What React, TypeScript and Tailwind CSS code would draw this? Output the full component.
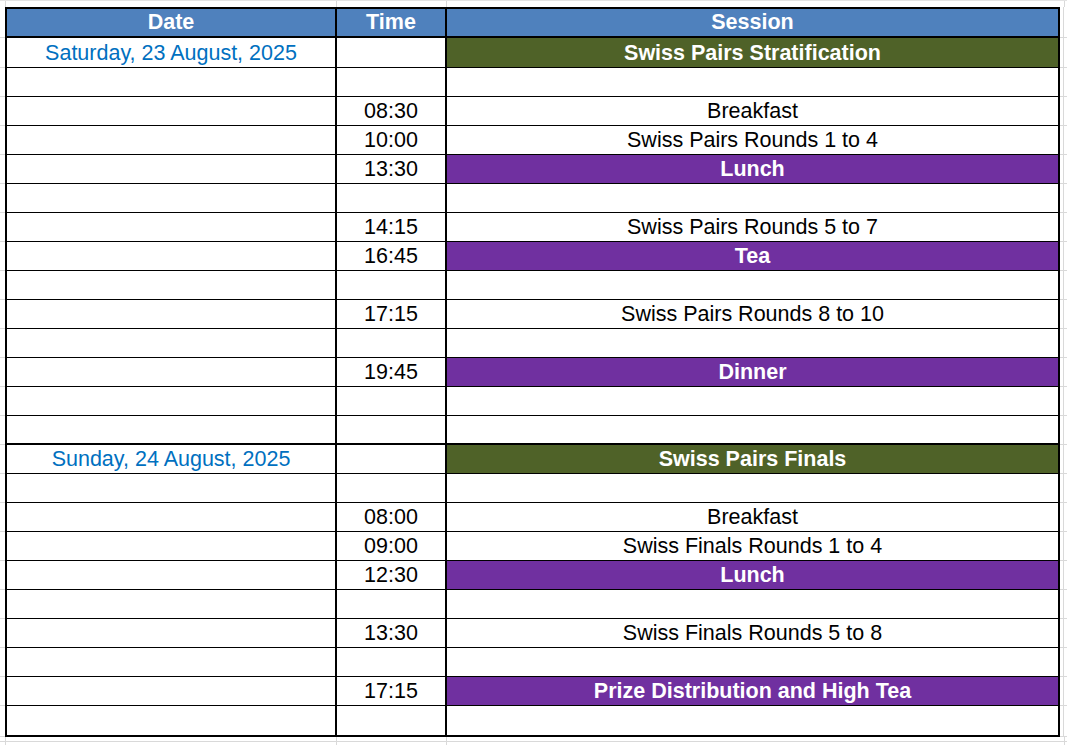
import React from "react";

type Row = { date?: string; time?: string; session?: string; kind?: "green" | "purple" | "plain" };

const rows: Row[] = [
  { date: "Saturday, 23 August, 2025", session: "Swiss Pairs Stratification", kind: "green" },
  {},
  { time: "08:30", session: "Breakfast" },
  { time: "10:00", session: "Swiss Pairs Rounds 1 to 4" },
  { time: "13:30", session: "Lunch", kind: "purple" },
  {},
  { time: "14:15", session: "Swiss Pairs Rounds 5 to 7" },
  { time: "16:45", session: "Tea", kind: "purple" },
  {},
  { time: "17:15", session: "Swiss Pairs Rounds 8 to 10" },
  {},
  { time: "19:45", session: "Dinner", kind: "purple" },
  {},
  {},
  { date: "Sunday, 24 August, 2025", session: "Swiss Pairs Finals", kind: "green" },
  {},
  { time: "08:00", session: "Breakfast" },
  { time: "09:00", session: "Swiss Finals Rounds 1 to 4" },
  { time: "12:30", session: "Lunch", kind: "purple" },
  {},
  { time: "13:30", session: "Swiss Finals Rounds 5 to 8" },
  {},
  { time: "17:15", session: "Prize Distribution and High Tea", kind: "purple" },
  {},
];

function GrayStrip({ h, line }: { h: string; line?: boolean }) {
  return (
    <div className={`flex ${h} ${line ? "border-b border-[#d9d9d9]" : ""}`}>
      <div className="w-[6px] border-r border-[#d9d9d9]" />
      <div className="w-[331px] border-r border-[#d9d9d9]" />
      <div className="w-[110px] border-r border-[#d9d9d9]" />
      <div className="w-[618px] border-r border-[#d9d9d9]" />
      <div className="flex-1" />
    </div>
  );
}

export default function App() {
  return (
    <div className="w-[1067px] h-[745px] bg-white flex flex-col overflow-hidden font-['Liberation_Sans',Arial,sans-serif] text-[21.5px] leading-none">
      <div className="h-px bg-[#e3e3e3]" />
      <GrayStrip h="h-[6px]" />
      {/* header */}
      <div className="flex h-[31px]">
        <div className="w-[5px] border-b border-[#d9d9d9]" />
        <div className="w-[330px] border-l-2 border-t-2 border-b-2 border-black bg-[#4f81bd] text-white font-bold flex items-center justify-center pt-px">
          Date
        </div>
        <div className="w-[110px] border-l-2 border-t-2 border-b-2 border-black bg-[#4f81bd] text-white font-bold flex items-center justify-center pt-px">
          Time
        </div>
        <div className="w-[615px] border-l-2 border-r-2 border-t-2 border-b-2 border-black bg-[#4f81bd] text-white font-bold flex items-center justify-center pt-px">
          Session
        </div>
        <div className="flex-1 flex border-b border-[#d9d9d9]">
          <div className="w-[4px] border-r border-[#d9d9d9]" />
        </div>
      </div>
      {rows.map((r, i) => {
        const first = i === 0;
        const thick = i === 13 || i === rows.length - 1;
        const last = i === rows.length - 1;
        const h = first ? "h-[30px]" : last ? "h-[31px]" : "h-[29px]";
        const bb = thick ? "border-b-2" : "border-b";
        const sessCls =
          r.kind === "green"
            ? "bg-[#4f6228] text-white font-bold"
            : r.kind === "purple"
            ? "bg-[#7030a0] text-white font-bold"
            : "bg-white text-black";
        return (
          <div key={i} className={`flex ${h}`}>
            <div className="w-[5px] border-b border-[#d9d9d9]" />
            <div className={`w-[330px] border-l-2 ${bb} border-black flex items-center justify-center pt-[2px] text-[#0070c0]`}>
              {r.date ?? ""}
            </div>
            <div className={`w-[110px] border-l-2 ${bb} border-black flex items-center justify-center pt-[2px] text-black`}>
              {r.time ?? ""}
            </div>
            <div className={`w-[615px] border-l-2 border-r-2 ${bb} border-black flex items-center justify-center pt-[2px] ${sessCls}`}>
              {r.session ?? ""}
            </div>
            <div className="flex-1 flex border-b border-[#d9d9d9]">
              <div className="w-[4px] border-r border-[#d9d9d9]" />
            </div>
          </div>
        );
      })}
      <GrayStrip h="h-[5px]" line />
      <GrayStrip h="flex-1" />
    </div>
  );
}
